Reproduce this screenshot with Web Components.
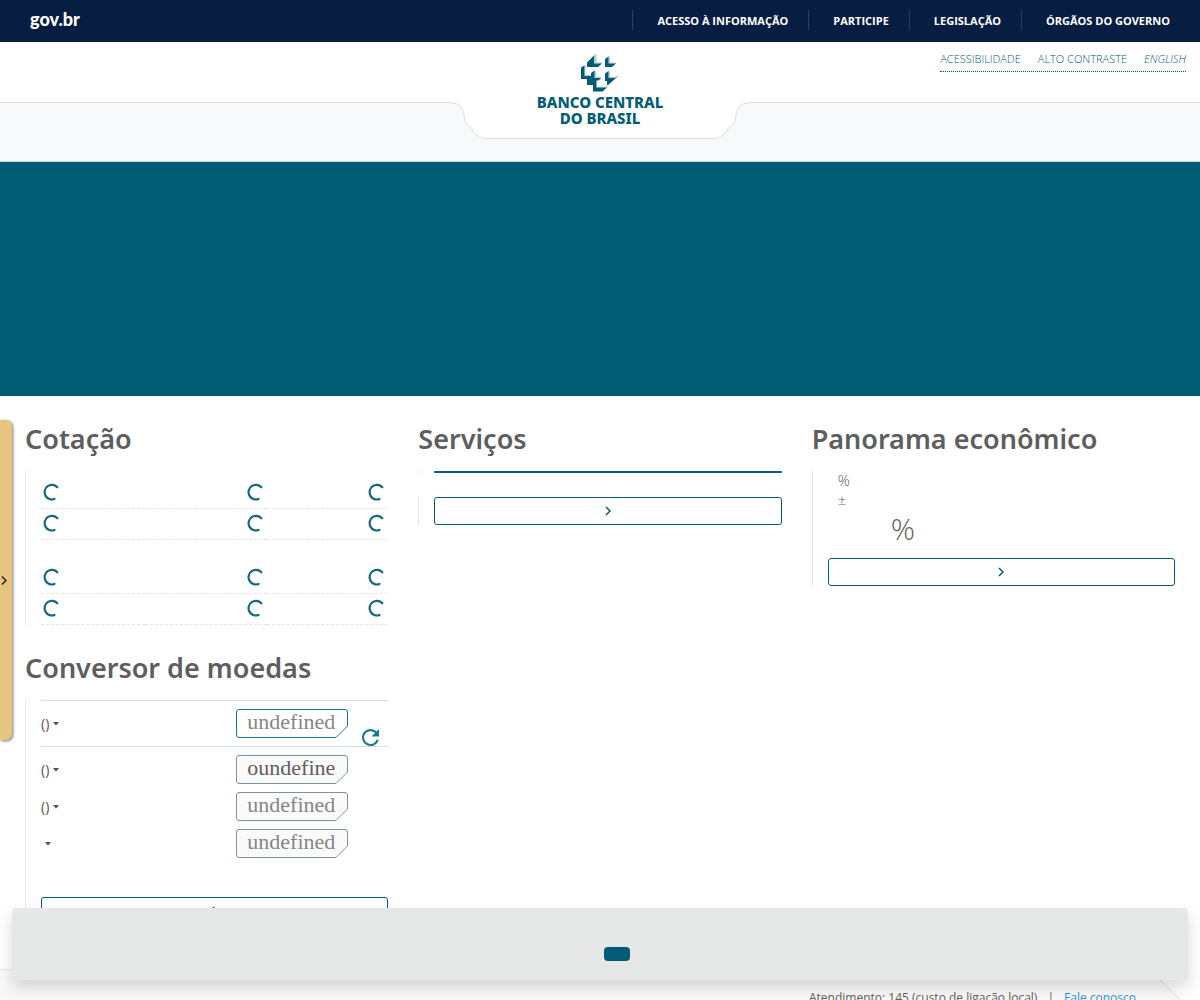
<!DOCTYPE html>
<html lang="pt-BR">
<head>
<meta charset="utf-8">
<meta name="viewport" content="width=device-width, initial-scale=1">
<title>Banco Central do Brasil</title>
<style>
  body {
    margin: 0;
    background: #fff;
    color: #5e5e5e;
    font: 400 13px/18px "Noto Sans", "Open Sans", sans-serif;
    --teal: #025c75;
    --line: #e3e5e6;
  }
</style>
</head>
<body>
<bc-page></bc-page>

<script>
class BaseElement extends HTMLElement {
  connectedCallback() {
    if (this.shadowRoot) return;
    this.attachShadow({ mode: 'open' }).innerHTML =
      '<style>*{box-sizing:border-box}:host{display:block}</style>' + this.render();
  }
}

/* Government bar across the top */
class GovBar extends BaseElement {
  render() {
    const links = ['Acesso à informação', 'Participe', 'Legislação', 'Órgãos do governo'];
    return `<style>
      :host { background: #071d41; }
      nav { display: flex; align-items: center; height: 42px; padding: 0 30px 2px; }
      a { color: #fff; text-decoration: none; }
      .brand { margin-right: auto; font: 900 18px/20px Lato, sans-serif; padding-bottom: 2px; }
      ul { display: flex; margin: 0; padding: 0; list-style: none; }
      li { border-left: 1px solid #2c3f5e; padding: 0 20px 0 24px; height: 20px; }
      li:last-child { padding-right: 0; }
      li a { font: 700 11px/22px "Open Sans", sans-serif; text-transform: uppercase; }
    </style>
    <nav aria-label="Governo">
      <a class="brand" href="#">gov.br</a>
      <ul>${links.map(t => `<li><a href="#">${t}</a></li>`).join('')}</ul>
    </nav>`;
  }
}

class BcLogo extends BaseElement {
  render() {
    return `<style>
      a { display: grid; justify-items: center; color: var(--teal); text-decoration: none;
          font: 800 15px/16px "Noto Sans", sans-serif; text-align: center; text-transform: uppercase; }
      svg { display: block; margin-bottom: 2px; }
    </style>
    <a href="#">
      <svg width="38" height="39" viewBox="0 0 38 39" aria-hidden="true">
        <g fill="#b4ced6">
          <path d="M13 2.500L15.500 .5V9.500H21V10.500H13ZM27.500 3.500L29 2.500V9.500H35V10.500H27.500ZM3.500 12.500L4.500 11.500V22H10V23H3.500ZM13.500 18L15 17V24H20V25H13.500ZM27.500 18L29 17V24H34L38 21.500L34 25H27.500ZM15.500 33.500H26V34.500H15.500Z"/>
        </g>
        <g fill="#025c75">
          <path d="M6 9.500L13 2.500V10.500H21L17 14H6Z"/>
          <path d="M24 6L27.500 3.500V10.500H35L31 14H24Z"/>
          <path d="M0 14.500L3.500 12.500V23H10V20L13.500 17.500V25H20L17.500 27.500H15.500V34.500H26L21.500 38.500H12V32H6V26H0Z"/>
          <path d="M24 20.500L27.500 18V25H34L38 22.500L27 32H26V28H24Z"/>
        </g>
      </svg>
      <span>Banco Central</span>
      <span>do Brasil</span>
    </a>`;
  }
}

class SiteHeader extends BaseElement {
  render() {
    return `<style>
      header { display: grid; grid-template: 60px 59px / 1fr; border-bottom: 1px solid #cfd8cf; }
      .top { grid-area: 1 / 1; display: flex; justify-content: flex-end; align-items: flex-start; padding: 7px 14px 0; }
      .band { grid-area: 2 / 1; background: #f8f9fb; border-top: 1px solid #dcdfe0; }
      .brand { grid-area: 1 / 1 / 3 / 2; justify-self: center; display: grid; justify-items: center; }
      .notch, bc-logo { grid-area: 1 / 1; }
      .notch { display: block; align-self: start; }
      bc-logo { padding-top: 11px; }
      ul { display: flex; gap: 17px; margin: 0; padding: 0; list-style: none; border-bottom: 1px dotted var(--teal); height: 23px; }
      ul a { color: var(--teal); text-decoration: none; text-transform: uppercase; font: 300 11px/18px "Open Sans", sans-serif; }
      li:last-child a { font-style: italic; }
    </style>
    <header>
      <div class="top"><ul>
        <li><a href="#">Acessibilidade</a></li><li><a href="#">Alto contraste</a></li><li><a href="#">English</a></li>
      </ul></div>
      <div class="band"></div>
      <div class="brand">
        <svg class="notch" width="300" height="98" viewBox="0 0 300 98" aria-hidden="true">
          <path d="M0 60.500Q14 61 14.500 76Q15 82 20.500 84.500Q26 96.500 37 96.500H263Q274 96.500 279.500 84.500Q285 82 285.500 76Q286 61 300 60.500V58H0Z" fill="#fff"/>
          <path d="M0 60.500Q14 61 14.500 76Q15 82 20.500 84.500Q26 96.500 37 96.500H263Q274 96.500 279.500 84.500Q285 82 285.500 76Q286 61 300 60.500" fill="none" stroke="#dcdfe0"/>
        </svg>
        <bc-logo></bc-logo>
      </div>
    </header>`;
  }
}

class SiteHero extends BaseElement {
  render() { return `<style>:host{background:var(--teal);height:234px}</style>`; }
}

/* A titled block; the body carries its own left rule */
class BcSection extends BaseElement {
  render() {
    return `<style>
      h2 { margin: 0 0 12px; font: 600 27px/40px "Noto Sans", "Open Sans", sans-serif; white-space: nowrap; }
    </style><h2>${this.getAttribute('heading')}</h2><slot></slot>`;
  }
}

class RuledBox extends BaseElement {
  render() {
    return `<style>:host{border-left:1px solid var(--line);padding-left:15px}</style><slot></slot>`;
  }
}

class MoreButton extends BaseElement {
  render() {
    return `<style>
      button { display: grid; place-items: center; width: 100%; height: 28px; padding: 0;
        background: #fff; border: 1px solid var(--teal); border-radius: 3px; cursor: pointer; }
    </style>
    <button type="button" aria-label="${this.getAttribute('label')}">
      <svg width="6" height="10" viewBox="0 0 6 10" fill="none" stroke="#025c75" stroke-width="1.500" aria-hidden="true"><path d="M1 1L5 5L1 9"/></svg>
    </button>`;
  }
}

class QuoteTable extends BaseElement {
  render() {
    const spin = `<td><svg width="22" height="22" viewBox="0 0 22 22" fill="none" stroke="#14677f" stroke-width="2.200" stroke-linecap="round" role="img" aria-label="Carregando"><path d="M16.300 5.300A7.300 7.300 0 1 0 13.500 17"/></svg></td>`;
    const row = `<tr>${spin.repeat(3)}</tr>`;
    return `<style>
      table { width: 100%; border-spacing: 0; table-layout: fixed; }
      td { height: 31px; padding: 0; border-bottom: 1px dashed var(--line); text-align: right; }
      td:first-child { width: 30%; text-align: left; }
      svg { display: inline-block; vertical-align: middle; }
    </style><table aria-label="${this.getAttribute('label')}"><tbody>${row}${row}</tbody></table>`;
  }
}

class CurrencyRow extends BaseElement {
  render() {
    const main = this.hasAttribute('main');
    const text = this.getAttribute('currency');
    return `<style>
      .row { display: grid; grid-template-columns: 1fr 112px 40px; padding-top: 8px; }
      .main { border: solid #d3e2e0; border-width: 1px 0; }
      label { display: flex; align-items: center; gap: 4px; }
      select { appearance: none; border: 0; padding: 0; background: none; color: inherit; font: 400 14px/18px "Noto Sans", sans-serif; field-sizing: content; min-width: 0; }
      label, .field { margin-bottom: ${main ? 8 : 0}px; }
      .field { display: grid; }
      .field svg, input { grid-area: 1 / 1; display: block; }
      input { width: 112px; height: 29px; border: 0; padding: 0 12px 4px 11px; background: none;
        font: 400 22px/24px "Liberation Serif", serif; color: ${this.hasAttribute('strong') ? '#5e5e5e' : '#868686'}; }
      button { align-self: end; justify-self: end; margin-right: 9px; border: 0; padding: 0; background: none; cursor: pointer; }
      button svg { display: block; }
    </style>
    <div class="row ${main ? 'main' : ''}">
      <label><select aria-label="Moeda"><option>${text}</option></select>
        <svg width="6" height="4" viewBox="0 0 6 4" aria-hidden="true"><path d="M0 0H6L3 3.500Z" fill="#4f4f4f"/></svg></label>
      <div class="field">
        <svg width="112" height="29" viewBox="0 0 112 29" aria-hidden="true"><path d="M3 .5H109Q111.500 .5 111.500 3V17L100 28.500H3Q.5 28.500 .5 26V3Q.5 .5 3 .5Z" fill="${main ? '#fff' : '#fafafa'}" stroke="${main ? '#147a96' : '#7895a0'}"/></svg>
        <input type="text" aria-label="Valor" value="${this.getAttribute('value')}">
      </div>
      ${main ? `<button type="button" aria-label="Atualizar"><svg width="17" height="17" viewBox="4 4 16 16" fill="#147a96" aria-hidden="true"><path d="M17.650 6.350C16.200 4.900 14.210 4 12 4c-4.420 0-7.990 3.580-7.990 8s3.570 8 7.990 8c3.730 0 6.840-2.550 7.730-6h-2.080c-.82 2.330-3.040 4-5.650 4-3.310 0-6-2.690-6-6s2.690-6 6-6c1.660 0 3.140.69 4.220 1.780L13 11h7V4l-2.350 2.350z"/></svg></button>` : ''}
    </div>`;
  }
}

class EconomicPanel extends BaseElement {
  render() {
    return `<style>
      p { margin: 0; padding-left: 10px; font: 300 15px/19px "Open Sans", sans-serif; }
      .big { padding: 0 0 9px 63px; font-size: 30px; line-height: 40px; }
    </style><p>%</p><p>±</p><p class="big">%</p>`;
  }
}

class SideTab extends BaseElement {
  render() {
    return `<style>
      :host { position: fixed; left: 0; top: 420px; z-index: 2; }
      button { display: grid; place-items: center start; width: 12px; height: 320px; padding: 0 0 0 1px; border: 0;
        background: #e6c580; border-radius: 0 6px 6px 0; box-shadow: 1px 1px 3px #777; cursor: pointer; }
    </style>
    <button type="button" aria-label="Abrir painel"><svg width="6" height="9" viewBox="0 0 6 9" fill="none" stroke="#222" stroke-width="1.500" aria-hidden="true"><path d="M1 .5L5 4.500L1 8.500"/></svg></button>`;
  }
}

class CookieBar extends BaseElement {
  render() {
    return `<style>
      :host { position: fixed; left: 12px; right: 12px; bottom: 20px; z-index: 3; display: flex; justify-content: center;
        padding: 39px 0 19px 34px; background: #e6e8e7; border-radius: 4px; box-shadow: 0 8px 16px rgba(0,0,0,.15); }
      button { width: 26px; height: 14px; padding: 0; border: 0; border-radius: 4px; background: var(--teal); cursor: pointer; }
    </style><button type="button" aria-label="Aceitar"></button>`;
  }
}

class SiteFooter extends BaseElement {
  render() {
    return `<style>
      footer { display: flex; justify-content: flex-end; gap: 10px; padding: 19px 64px 40px; border-top: 1px solid var(--line);
        background: linear-gradient(225deg, var(--line) 36px, #f9f9f9 36px);
        clip-path: polygon(0 0, calc(100% - 50px) 0, 100% 50px, 100% 100%, 0 100%);
        font: 400 12px/18px "Open Sans", sans-serif; }
      a { color: #2d95d2; text-decoration: none; }
    </style>
    <footer><span>Atendimento: 145 (custo de ligação local)</span><span>|</span><a href="#">Fale conosco</a></footer>`;
  }
}

class BcPage extends BaseElement {
  render() {
    return `<style>
      main { display: grid; grid-template-columns: repeat(3, minmax(0, 1fr)); gap: 30px; padding: 23px 25px 44px; align-items: start; }
      .stack { display: grid; gap: 23px; }
      quote-table { padding-top: 7px; }
      quote-table + quote-table { padding-top: 23px; }
      .bar { height: 2px; background: var(--teal); border-radius: 1px; }
      .next { margin-top: 24px; }
      .convert { padding-top: 39px; }
    </style>
    <gov-bar></gov-bar>
    <site-header></site-header>
    <site-hero></site-hero>
    <main>
      <div class="stack">
        <bc-section heading="Cotação"><ruled-box>
          <quote-table label="Compra e venda"></quote-table><quote-table label="Outras cotações"></quote-table>
        </ruled-box></bc-section>
        <bc-section heading="Conversor de moedas"><ruled-box>
          <currency-row main currency="()" value="undefined"></currency-row>
          <currency-row strong currency="()" value="oundefine"></currency-row>
          <currency-row currency="()" value="undefined"></currency-row>
          <currency-row currency="" value="undefined"></currency-row>
          <more-button class="convert" label="Conversor completo"></more-button>
        </ruled-box></bc-section>
      </div>
      <bc-section heading="Serviços">
        <ruled-box><div class="bar"></div></ruled-box>
        <ruled-box class="next"><more-button label="Mais serviços"></more-button></ruled-box>
      </bc-section>
      <bc-section heading="Panorama econômico"><ruled-box>
        <economic-panel></economic-panel><more-button label="Mais indicadores"></more-button>
      </ruled-box></bc-section>
    </main>
    <site-footer></site-footer>
    <side-tab></side-tab>
    <cookie-bar></cookie-bar>`;
  }
}

[['gov-bar', GovBar], ['bc-logo', BcLogo], ['site-header', SiteHeader], ['site-hero', SiteHero],
 ['bc-section', BcSection], ['ruled-box', RuledBox], ['more-button', MoreButton], ['quote-table', QuoteTable],
 ['currency-row', CurrencyRow], ['economic-panel', EconomicPanel], ['side-tab', SideTab],
 ['cookie-bar', CookieBar], ['site-footer', SiteFooter], ['bc-page', BcPage]
].forEach(([name, cls]) => customElements.define(name, cls));
</script>
</body>
</html>
